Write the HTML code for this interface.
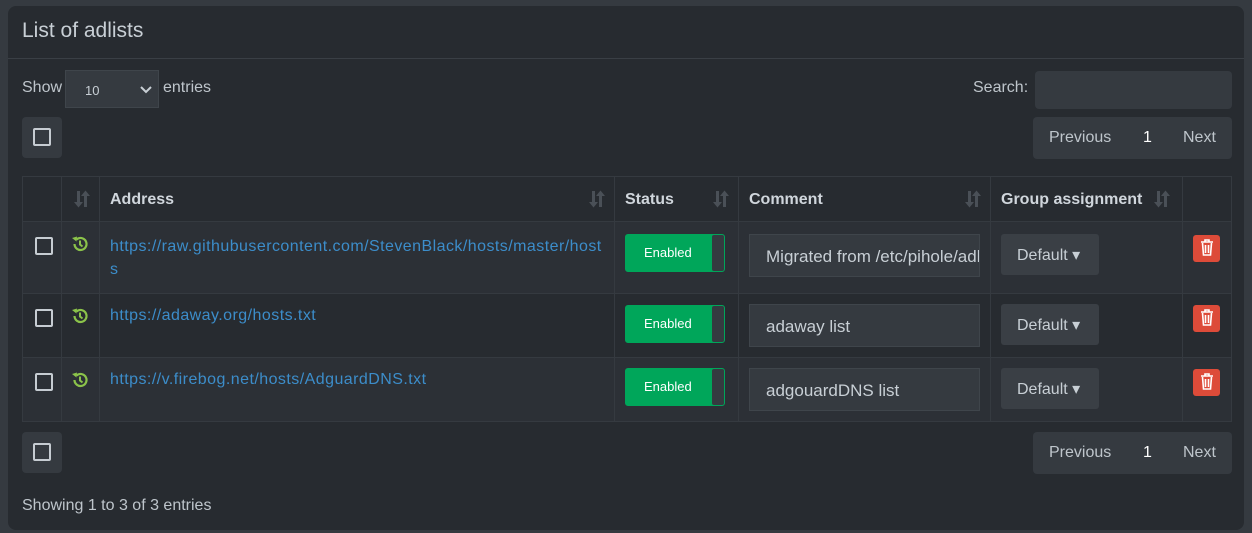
<!DOCTYPE html>
<html><head><meta charset="utf-8"><style>
*{box-sizing:border-box;margin:0;padding:0}
body{width:1252px;height:533px;background:#353a40;font-family:"Liberation Sans",sans-serif;color:#bec5cb;font-size:16px;position:relative;overflow:hidden}
.card{position:absolute;left:8px;top:6px;width:1236px;height:524px;background:#272b30;border-radius:8px}
.abs{position:absolute}
.title{left:14px;top:13px;font-size:21px;color:#c8cfd5}
.sep{left:0;top:52px;width:1236px;height:1px;background:#3a3f45}
.sel{left:57px;top:64px;width:94px;height:38px;background:#353a40;border:1px solid #3f454b;font-size:13px;padding:12px 0 0 19px;color:#c8cfd5}
.btn{background:#353a40;border-radius:4px}
.cb{width:18px;height:18px;border:2px solid #c6ccd2;border-radius:2px}
table{position:absolute;left:14px;top:170px;border-collapse:collapse;width:1210px}
td,th{border:1px solid #353a40;text-align:left;vertical-align:top}
th{height:45px;font-weight:bold;color:#d0d6dc;padding:14px 10px 0;font-size:16px;position:relative}
.sort{position:absolute;right:8px;top:13px}
a{color:#3c8dca;text-decoration:none;font-size:16px;letter-spacing:0.45px}
.r1{background:#2c3036}.r2{background:#272b30}
.en{display:inline-block;width:100px;height:38px;background:#00a65a;border:1px solid #00a65a;border-radius:3px;position:relative;color:#fff;font-size:13px;padding:10px 0 0 18px}
.en i{position:absolute;right:0;top:0;width:12px;height:36px;background:#353a40;border-radius:2px}
.inp{width:231px;height:43px;background:#353a40;border:1px solid #3f454b;color:#c8cfd5;padding:12px 0 0 16px;font-size:17px;white-space:nowrap;overflow:hidden}
.def{display:inline-block;width:98px;height:41px;background:#3a3f45;border-radius:3px;padding:11px 0 0 16px;font-size:16px;color:#c8cfd5}
.del{display:inline-block;width:27px;height:27px;background:#dd4b39;border-radius:3px;text-align:center;padding-top:4px}
</style></head><body>
<svg width="0" height="0" style="position:absolute"><defs><symbol id="s" viewBox="0 0 18 18"><path d="M4 1h3v11h3l-4.5 5.5L1 12h3z M11 17h3V6h3l-4.5-5.5L8 6h3z" fill="#4a5057"/></symbol></defs></svg>
<div class="card">
<div class="abs title">List of adlists</div>
<div class="abs sep"></div>
<div class="abs" style="left:14px;top:73px">Show</div>
<div class="abs sel">10<svg class="abs" style="left:74px;top:14px" width="12" height="9" viewBox="0 0 12 9"><path d="M1 2l5 5 5-5" stroke="#c8cfd5" stroke-width="2" fill="none"/></svg></div>
<div class="abs" style="left:155px;top:73px">entries</div>
<div class="abs" style="left:965px;top:73px">Search:</div>
<div class="abs btn" style="left:1027px;top:65px;width:197px;height:38px"></div>
<div class="abs btn" style="left:14px;top:111px;width:40px;height:41px"><div class="cb abs" style="left:11px;top:11px"></div></div>
<div class="abs btn" style="left:1025px;top:111px;width:199px;height:42px"><span class="abs" style="left:16px;top:12px">Previous</span><span class="abs" style="left:110px;top:12px;color:#fff">1</span><span class="abs" style="left:150px;top:12px">Next</span></div>
<table>
<tr><th style="width:39px"></th><th style="width:38px"><svg class="sort" width="18" height="18"><use href="#s"/></svg></th><th style="width:515px">Address<svg class="sort" width="18" height="18"><use href="#s"/></svg></th><th style="width:124px">Status<svg class="sort" width="18" height="18"><use href="#s"/></svg></th><th style="width:252px">Comment<svg class="sort" width="18" height="18"><use href="#s"/></svg></th><th style="width:192px">Group assignment<svg class="sort" style="right:11px" width="18" height="18"><use href="#s"/></svg></th><th></th></tr>
<tr class="r1" style="height:72px"><td><div class="cb" style="margin:15px 0 0 12px"></div></td><td><svg style="margin:13px 0 0 9px" width="18" height="18" viewBox="0 0 18 18"><path d="M3.5 9a6 6 0 1 0 2-4.5" stroke="#8bc34a" stroke-width="2.2" fill="none"/><path d="M1 3l4.5 3.5L6 1.5z" fill="#8bc34a"/><path d="M9 5.5v4l2.5 2" stroke="#8bc34a" stroke-width="2" fill="none"/></svg></td><td style="padding:13px 10px 0"><a style="line-height:23px;word-break:break-all">https://raw.githubusercontent.com/StevenBlack/hosts/master/hosts</a></td><td style="padding:12px 10px"><span class="en">Enabled<i></i></span></td><td style="padding:12px 10px"><div class="inp">Migrated from /etc/pihole/adlists.list</div></td><td style="padding:12px 10px"><span class="def">Default ▾</span></td><td style="padding:13px 10px"><span class="del"><svg width="14" height="17" viewBox="0 0 14 17"><path d="M1 3h12M5 3V1h4v2M2.5 4l1 12h7l1-12M5.5 6v8M8.5 6v8" stroke="#fff" stroke-width="1.6" fill="none"/></svg></span></td></tr>
<tr class="r2" style="height:64px"><td><div class="cb" style="margin:15px 0 0 12px"></div></td><td><svg style="margin:13px 0 0 9px" width="18" height="18" viewBox="0 0 18 18"><path d="M3.5 9a6 6 0 1 0 2-4.5" stroke="#8bc34a" stroke-width="2.2" fill="none"/><path d="M1 3l4.5 3.5L6 1.5z" fill="#8bc34a"/><path d="M9 5.5v4l2.5 2" stroke="#8bc34a" stroke-width="2" fill="none"/></svg></td><td style="padding:13px 10px 0"><a>https://adaway.org/hosts.txt</a></td><td style="padding:11px 10px"><span class="en">Enabled<i></i></span></td><td style="padding:10px 10px"><div class="inp">adaway list</div></td><td style="padding:10px 10px"><span class="def">Default ▾</span></td><td style="padding:11px 10px"><span class="del"><svg width="14" height="17" viewBox="0 0 14 17"><path d="M1 3h12M5 3V1h4v2M2.5 4l1 12h7l1-12M5.5 6v8M8.5 6v8" stroke="#fff" stroke-width="1.6" fill="none"/></svg></span></td></tr>
<tr class="r1" style="height:63px"><td><div class="cb" style="margin:15px 0 0 12px"></div></td><td><svg style="margin:13px 0 0 9px" width="18" height="18" viewBox="0 0 18 18"><path d="M3.5 9a6 6 0 1 0 2-4.5" stroke="#8bc34a" stroke-width="2.2" fill="none"/><path d="M1 3l4.5 3.5L6 1.5z" fill="#8bc34a"/><path d="M9 5.5v4l2.5 2" stroke="#8bc34a" stroke-width="2" fill="none"/></svg></td><td style="padding:13px 10px 0"><a>https://v.firebog.net/hosts/AdguardDNS.txt</a></td><td style="padding:10px 10px"><span class="en">Enabled<i></i></span></td><td style="padding:10px 10px"><div class="inp">adgouardDNS list</div></td><td style="padding:10px 10px"><span class="def">Default ▾</span></td><td style="padding:11px 10px"><span class="del"><svg width="14" height="17" viewBox="0 0 14 17"><path d="M1 3h12M5 3V1h4v2M2.5 4l1 12h7l1-12M5.5 6v8M8.5 6v8" stroke="#fff" stroke-width="1.6" fill="none"/></svg></span></td></tr>
</table>
<div class="abs btn" style="left:14px;top:426px;width:40px;height:41px"><div class="cb abs" style="left:11px;top:11px"></div></div>
<div class="abs btn" style="left:1025px;top:426px;width:199px;height:42px"><span class="abs" style="left:16px;top:12px">Previous</span><span class="abs" style="left:110px;top:12px;color:#fff">1</span><span class="abs" style="left:150px;top:12px">Next</span></div>
<div class="abs" style="left:14px;top:491px">Showing 1 to 3 of 3 entries</div>
</div>
</body></html>
